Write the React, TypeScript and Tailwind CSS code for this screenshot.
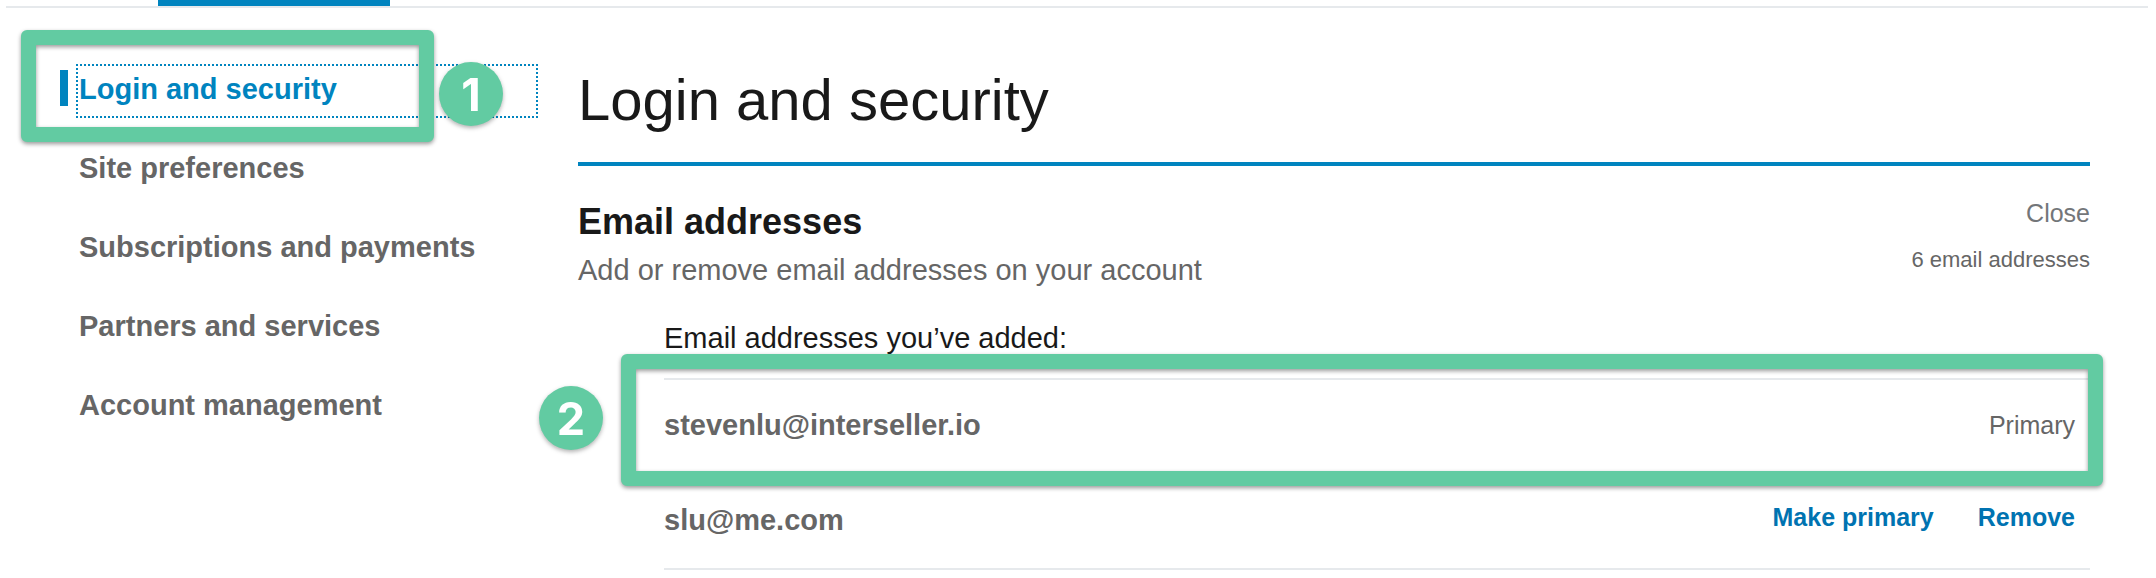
import React from "react";
import { clsx } from "clsx";

const navItems = [
  { label: "Login and security", active: true },
  { label: "Site preferences" },
  { label: "Subscriptions and payments" },
  { label: "Partners and services" },
  { label: "Account management" },
];

const emails = [
  { address: "stevenlu@interseller.io", primary: true },
  { address: "slu@me.com", primary: false },
];

const Outline: React.FC<{ className?: string }> = ({ className }) => (
  <div
    className={clsx(
      "pointer-events-none absolute z-10 rounded-md border-[15px] border-[#62cba2] drop-shadow-[0_2px_2px_rgba(0,0,0,0.4)]",
      className
    )}
  />
);

const StepBadge: React.FC<{ step: number; className?: string }> = ({ step, className }) => (
  <span
    className={clsx(
      "absolute z-10 flex size-16 items-center justify-center rounded-full bg-[#62cba2] font-[Inter,sans-serif] text-[45px] leading-none font-bold text-white drop-shadow-[0_2px_2px_rgba(0,0,0,0.3)]",
      className
    )}
  >
    {step}
  </span>
);

const SideNav = () => (
  <nav className="w-[462px] shrink-0">
    <ul className="flex flex-col gap-[25px]">
      {navItems.map((item) => (
        <li key={item.label} className="relative">
          {item.active && <span className="absolute top-1.5 -left-4 h-9 w-2 bg-[#0084bf]" />}
          <a
            href="#"
            className={clsx(
              "block border-2 border-dotted pb-1 pl-px text-[29px] leading-[46px] font-bold",
              item.active ? "border-[#0084bf] text-[#0084bf]" : "border-transparent text-[#666666]"
            )}
          >
            {item.label}
          </a>
          {item.active && (
            <>
              <Outline className="-top-[34px] -left-[55px] h-28 w-[413px]" />
              <StepBadge step={1} className="-top-0.5 left-[363px]" />
            </>
          )}
        </li>
      ))}
    </ul>
  </nav>
);

const EmailList = () => (
  <div className="mt-7 pl-[86px]">
    <p className="pb-5 text-[29px] leading-10 text-[#191919]">Email addresses you’ve added:</p>
    <ul className="border-b-2 border-[#e6e9ec]">
      {emails.map((email) => (
        <li
          key={email.address}
          className="relative flex h-[95px] items-center justify-between border-t-2 border-[#e6e9ec] pr-[15px] pb-1"
        >
          <span className="text-[29px] leading-10 font-bold text-[#666666]">{email.address}</span>
          {email.primary ? (
            <span className="text-[25px] leading-[30px] text-[#666666]">Primary</span>
          ) : (
            <div className="flex gap-11 pb-1.5 text-[25px] leading-[30px] font-bold text-[#0073b1]">
              <button type="button">Make primary</button>
              <button type="button">Remove</button>
            </div>
          )}
          {email.primary && (
            <>
              <Outline className="-top-[26px] -right-[13px] -bottom-[13px] -left-[43px]" />
              <StepBadge step={2} className="top-1.5 -left-[125px]" />
            </>
          )}
        </li>
      ))}
    </ul>
  </div>
);

const App = () => {
  return (
    <div className="bg-white font-['Liberation_Sans',Arial,sans-serif]">
      <header className="mr-2 ml-1.5 border-b-2 border-[#e6e9ec] pl-[152px]">
        <div className="h-1.5 w-[232px] bg-[#0084bf]" />
      </header>
      <div className="flex gap-10 pt-14 pr-[66px] pl-[76px]">
        <SideNav />
        <main className="min-w-0 flex-1">
          <h1 className="border-b-4 border-[#0084bf] pb-[26px] text-[58px] leading-[72px] text-[#191919]">
            Login and security
          </h1>
          <section>
            <div className="flex justify-between pt-8">
              <div className="pt-1.5">
                <h2 className="text-[36px] leading-9 font-bold text-[#191919]">Email addresses</h2>
                <p className="mt-2.5 text-[29px] leading-10 text-[#666666]">
                  Add or remove email addresses on your account
                </p>
              </div>
              <div className="flex flex-col items-end gap-5">
                <button type="button" className="text-[25px] leading-[30px] text-[#737679]">
                  Close
                </button>
                <p className="text-[22px] leading-6 text-[#666666]">6 email addresses</p>
              </div>
            </div>
            <EmailList />
          </section>
        </main>
      </div>
    </div>
  );
};

export default App;
